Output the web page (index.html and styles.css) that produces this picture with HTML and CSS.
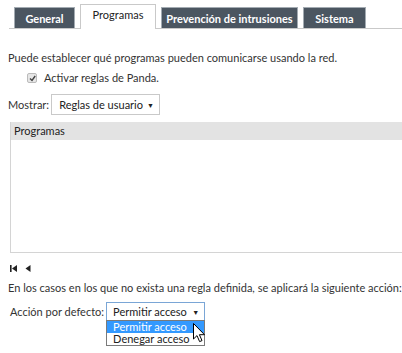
FILE: index.html
```html
<!DOCTYPE html>
<html>
<head>
  <title>Firewall - Programas</title>
  <link rel="stylesheet" href="styles.css">
  <meta charset="utf-8">
</head>
<body lang="es">
  <div class="tabs">
    <div class="tab t-general">General</div>
    <div class="tab active t-prog">Programas</div>
    <div class="tab t-prev">Prevención de intrusiones</div>
    <div class="tab t-sis">Sistema</div>
  </div>

  <p class="intro">Puede establecer qué programas pueden comunicarse usando la red.</p>
  <label class="chk"><span class="box"><svg width="7" height="7" viewBox="0 0 7 7"><path d="M1 3.5 L3 5.5 L6.2 1" fill="none" stroke="#444" stroke-width="1.4"/></svg></span>Activar reglas de Panda.</label>

  <div class="row show">
    <span>Mostrar:</span>
    <div class="sel">Reglas de usuario <span class="caret">▼</span></div>
  </div>

  <div class="grid">
    <div class="grid-head">Programas</div>
  </div>

  <div class="pager">
    <svg width="8" height="7" viewBox="0 0 8 7"><rect x="0" y="0" width="1.6" height="7" fill="#222"/><path d="M7 0 L2 3.5 L7 7 Z" fill="#222"/></svg>
    <svg width="6" height="7" viewBox="0 0 6 7"><path d="M5.5 0 L0.5 3.5 L5.5 7 Z" fill="#222"/></svg>
  </div>

  <p class="note">En los casos en los que no exista una regla definida, se aplicará la siguiente acción:</p>

  <div class="row action">
    <span>Acción por defecto:</span>
    <div class="sel sel-open">Permitir acceso <span class="caret">▼</span>
      <ul class="menu">
        <li class="hl">Permitir acceso</li>
        <li>Denegar acceso</li>
      </ul>
      <svg class="cursor" width="13" height="20" viewBox="0 0 13 20"><path d="M0.5 0.5 L0.5 16 L4 12.6 L6.6 18.6 L9 17.6 L6.4 11.7 L11.5 11.7 Z" fill="#fff" stroke="#000" stroke-width="1" stroke-linejoin="round"/></svg>
    </div>
  </div>
</body>
</html>
```

FILE: styles.css
```css
html, body {
  min-height: 100vh;
}
body {
  margin: 0;
  color: #333;
  font-family: Lato, "Open Sans", sans-serif;
  font-size: 11px;
  background: #fff;
}

/* tabs */
.tabs {
  display: flex;
  align-items: flex-end;
  gap: 5px;
  height: 24px;
  margin: 4px 0 0 9px;
  padding-left: 5px;
  border-bottom: 1px solid #c9c9c9;
}
.tab {
  height: 21px;
  line-height: 21px;
  box-sizing: border-box;
  text-align: center;
  color: #fff;
  font-weight: bold;
  background: #4b5661;
  border: 1px solid #a3abb2;
  border-bottom: none;
}
.tab.active {
  height: 25px;
  line-height: 20px;
  color: #222;
  font-weight: normal;
  background: #fff;
  border-color: #c9c9c9;
  margin-bottom: -1px;
}
.t-general {width: 61px;}
.t-prog {width: 76px;}
.t-prev {width: 137px;}
.t-sis {width: 63px;}

.intro {
  margin: 22px 0 0 8px;
  line-height: 14px;
}
.chk {
  display: flex;
  align-items: center;
  margin: 6px 0 0 27px;
  line-height: 14px;
}
.box {
  display: inline-flex;
  align-items: center;
  justify-content: center;
  width: 8px;
  height: 8px;
  margin-right: 7px;
  border: 1px solid #bbb;
  border-radius: 2px;
  background: #e6e6e6;
}

.row {
  display: flex;
  align-items: center;
  white-space: nowrap;
}
.show {
  margin: 9px 0 0 8px;
}
.action {
  margin: 7px 0 0 10px;
}
.sel {
  position: relative;
  display: flex;
  align-items: center;
  height: 21px;
  box-sizing: border-box;
  margin-left: 2px;
  padding: 0 5px 0 7px;
  border: 1px solid #c9c9c9;
  color: #222;
}
.caret {
  margin-left: 4px;
  font-size: 7px;
}
.sel-open {
  width: 99px;
  height: 19px;
  padding-left: 6px;
  border-color: #7aa6d6;
  justify-content: space-between;
}

.grid {
  margin: 7px 0 0 10px;
  height: 130px;
  border-left: 1px solid #d4d4d4;
  border-bottom: 1px solid #d4d4d4;
}
.grid-head {
  height: 18px;
  line-height: 18px;
  padding-left: 3px;
  background: #e3e3e3;
  color: #222;
}

.pager {
  display: flex;
  align-items: center;
  gap: 7px;
  margin: 11px 0 0 10px;
  height: 9px;
}

.note {
  margin: 8px 0 0 8px;
  line-height: 14px;
}

.menu {
  position: absolute;
  left: -1px;
  top: 17px;
  width: 99px;
  margin: 0;
  padding: 0;
  list-style: none;
  background: #fff;
  border: 1px solid #7a7a7a;
  box-sizing: border-box;
  z-index: 2;
}
.menu li {
  height: 12px;
  line-height: 12px;
  padding-left: 6px;
  color: #222;
}
.menu li.hl {
  background: #3399ff;
  color: #fff;
}
.cursor {
  position: absolute;
  left: 86px;
  top: 20px;
  z-index: 3;
}
```
